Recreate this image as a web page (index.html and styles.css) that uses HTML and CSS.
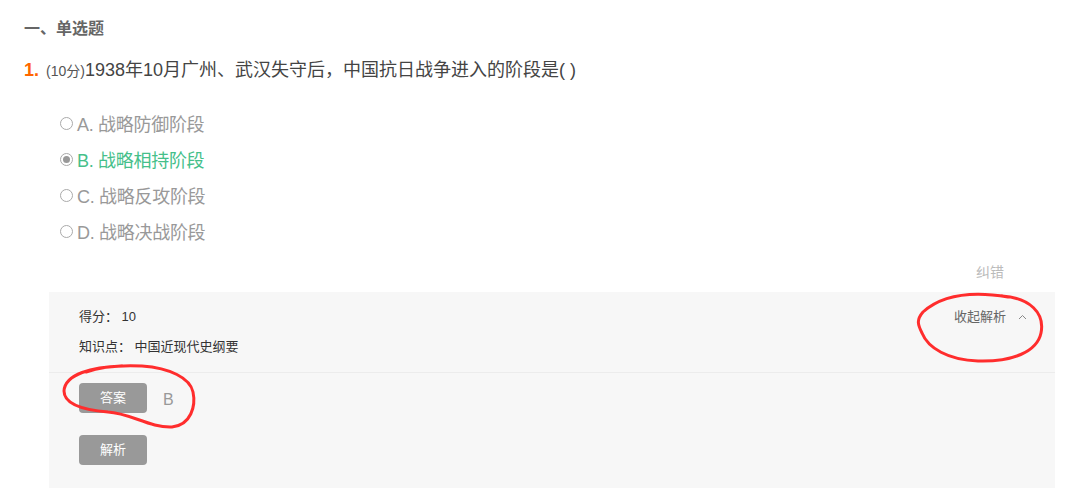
FILE: index.html
```html
<!DOCTYPE html>
<html lang="zh-CN">
<head>
    <meta charset="UTF-8">
    <meta name="viewport" content="width=device-width, initial-scale=1.0">
    <title>单选题</title>
    <link rel="stylesheet" href="styles.css">
</head>
<body>

    <h2 class="section-title">一、单选题</h2>

    <div class="question">
        <span class="q-num">1.</span>
        <span class="q-score">(10分)</span><span class="q-text">1938年10月广州、武汉失守后，中国抗日战争进入的阶段是( )</span>
    </div>

    <ul class="options">
        <li class="option"><span class="radio"></span>A. 战略防御阶段</li>
        <li class="option checked"><span class="radio"></span>B. 战略相持阶段</li>
        <li class="option"><span class="radio"></span>C. 战略反攻阶段</li>
        <li class="option"><span class="radio"></span>D. 战略决战阶段</li>
    </ul>

    <div class="report">纠错</div>

    <div class="panel">
        <div class="panel-info">
            <div class="info-row">
                <span>得分： 10</span>
                <span class="collapse">收起解析
                    <svg width="9" height="6" viewBox="0 0 9 6"><path d="M1 5 L4.5 1.5 L8 5" fill="none" stroke="#888" stroke-width="1"/></svg>
                </span>
            </div>
            <div class="info-row">知识点： 中国近现代史纲要</div>
        </div>
        <div class="panel-body">
            <div class="answer-row">
                <span class="btn">答案</span>
                <span class="answer">B</span>
            </div>
            <div class="answer-row">
                <span class="btn">解析</span>
            </div>
        </div>
    </div>

    <!-- 红色手绘圈注 -->
    <svg class="marks" width="1078" height="488" viewBox="0 0 1078 488">
        <path d="M1002 296 C1030 298,1045 313,1041 333 C1037 352,1012 362,978 361 C948 360,928 348,922 333 C918 325,916 320,923 312 C942 295,972 291,1008 297" />
        <path d="M122 366 C92 367,65 374,64 391 C64 405,84 410,108 412 C130 413,150 428,172 427 C191 425,196 406,193 392 C190 378,170 368,142 366 C120 365,100 367,86 372" />
    </svg>

</body>
</html>
```

FILE: styles.css
```css
body {
    margin: 0;
    padding: 19px 0 0 24px;
    font-family: "Liberation Sans", "Noto Sans CJK SC", sans-serif;
    color: #444;
    background: #fff;
    position: relative;
    height: 469px;
    overflow: hidden;
}
.section-title {
    margin: 0;
    font-size: 16px;
    line-height: 20px;
    font-weight: bold;
    color: #666;
}
.question {
    margin-top: 16px;
    line-height: 30px;
    font-size: 18px;
    color: #444;
}
.q-num {
    color: #ff6600;
    font-weight: bold;
    margin-right: 2px;
}
.q-score {
    font-size: 14px;
    color: #555;
}
.options {
    list-style: none;
    margin: 19px 0 0;
    padding: 0 0 0 36px;
}
.option {
    display: flex;
    align-items: center;
    height: 36px;
    font-size: 18px;
    color: #999;
    letter-spacing: -0.3px;
}
.option.checked {
    color: #45bf8a;
}
.radio {
    width: 11px;
    height: 11px;
    border: 1px solid #aaa;
    border-radius: 50%;
    margin-right: 4px;
    display: flex;
    align-items: center;
    justify-content: center;
    box-sizing: content-box;
}
.option.checked .radio::after {
    content: "";
    width: 7px;
    height: 7px;
    border-radius: 50%;
    background: #999;
}
.report {
    margin-top: 13px;
    line-height: 20px;
    font-size: 14px;
    color: #bbb;
    text-align: right;
    padding-right: 74px;
}
.panel {
    margin: 10px 0 0 25px;
    width: 1006px;
    background: #f7f7f7;
    height: 200px;
}
.panel-info {
    padding: 10px 28px 10px 30px;
    border-bottom: 1px solid #ececec;
}
.info-row {
    display: flex;
    justify-content: space-between;
    align-items: center;
    line-height: 30px;
    font-size: 13px;
    color: #333;
}
.collapse {
    color: #666;
    display: flex;
    align-items: center;
    gap: 12px;
}
.panel-body {
    padding: 10px 30px;
}
.answer-row {
    display: flex;
    align-items: center;
    gap: 16px;
    margin-bottom: 22px;
}
.btn {
    width: 68px;
    height: 30px;
    line-height: 30px;
    text-align: center;
    background: #999;
    color: #fff;
    border-radius: 4px;
    font-size: 13px;
}
.answer {
    font-size: 16px;
    color: #999;
    padding-top: 4px;
}
.marks {
    position: absolute;
    left: 0;
    top: 0;
    pointer-events: none;
}
.marks path {
    fill: none;
    stroke: #ff2d2d;
    stroke-width: 3;
    stroke-linecap: round;
}
```
